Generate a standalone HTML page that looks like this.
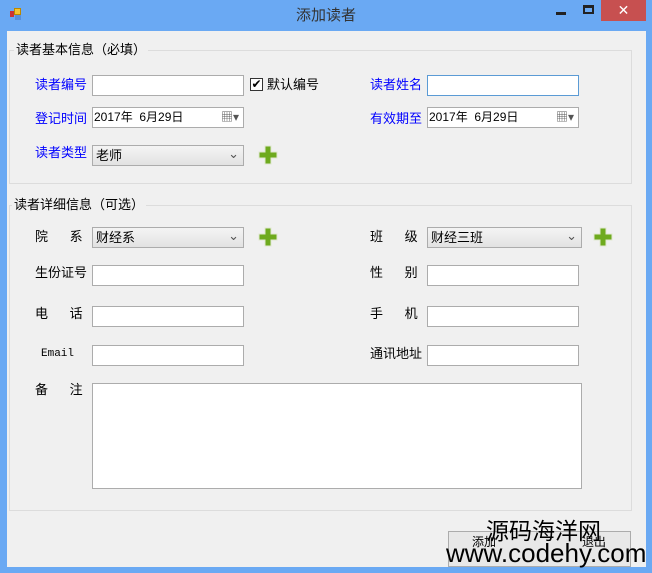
<!DOCTYPE html>
<html><head><meta charset="utf-8"><style>
*{margin:0;padding:0;box-sizing:border-box}
body{width:652px;height:573px;background:#6aa9f3;position:relative;overflow:hidden;font-family:"Liberation Sans","Noto Sans CJK SC",sans-serif;font-size:12px;color:#000;line-height:15px}
.a{position:absolute}
.client{left:7px;top:31px;width:639px;height:536px;background:#f0f0f0}
.title{left:0;top:7px;width:652px;text-align:center;font-size:15px;color:#333;line-height:18px}
.grp{border:1px solid #dcdcdc}
.lt{background:#f0f0f0;padding:0 2px;font-size:13px}
.lb{font-size:13px}
.blue{color:#0000ff}
.in{background:#fff;border:1px solid #acacac;height:21px;padding:2px 1px;font-size:12px}
.cb{background:linear-gradient(#f4f4f4,#e2e2e2);border:1px solid #acacac;height:21px;padding:2px 3px;font-size:13px}
.cb:after{content:"⌄";position:absolute;right:4px;top:0px;color:#555;font-size:13px}
.plus{width:20px;height:20px}
</style></head><body>
<div class="a" style="left:9px;top:7px;width:14px;height:14px">
<div class="a" style="left:1px;top:4px;width:4px;height:6px;background:#c33"></div>
<div class="a" style="left:5px;top:1px;width:7px;height:7px;background:#f4c430;border:1px solid #b80"></div>
<div class="a" style="left:6px;top:8px;width:6px;height:5px;background:#5a8fd8"></div></div>
<div class="a title">添加读者</div>
<div class="a" style="left:556px;top:12px;width:10px;height:3px;background:#222"></div>
<div class="a" style="left:583px;top:5px;width:11px;height:9px;border:2px solid #222;border-top-width:3px"></div>
<div class="a" style="left:601px;top:0;width:45px;height:21px;background:#c75050;color:#fff;text-align:center;font-size:14px;line-height:21px">✕</div>
<div class="a client"></div>

<div class="a grp" style="left:9px;top:50px;width:623px;height:134px"></div>
<div class="a lt" style="left:14px;top:42px">读者基本信息（必填）</div>
<div class="a lb blue" style="left:35px;top:77px">读者编号</div>
<div class="a in" style="left:92px;top:75px;width:152px"></div>
<div class="a" style="left:250px;top:78px;width:13px;height:13px;background:#fff;border:1px solid #333;font-size:12px;line-height:11px;text-align:center">✔</div>
<div class="a lb" style="left:267px;top:77px">默认编号</div>
<div class="a lb blue" style="left:370px;top:77px">读者姓名</div>
<div class="a in" style="left:427px;top:75px;width:152px;border-color:#5b9bd5"></div>
<div class="a lb blue" style="left:35px;top:111px">登记时间</div>
<div class="a in" style="left:92px;top:107px;width:152px">2017年&nbsp; 6月29日<span class="a" style="right:4px;top:2px;color:#555">▦▾</span></div>
<div class="a lb blue" style="left:370px;top:111px">有效期至</div>
<div class="a in" style="left:427px;top:107px;width:152px">2017年&nbsp; 6月29日<span class="a" style="right:4px;top:2px;color:#555">▦▾</span></div>
<div class="a lb blue" style="left:35px;top:145px">读者类型</div>
<div class="a cb" style="left:92px;top:145px;width:152px">老师</div>
<svg class="a plus" style="left:258px;top:145px" viewBox="0 0 20 20"><path d="M7 1h6v6h6v6h-6v6H7v-6H1V7h6z" fill="#6eaa1e" stroke="#e0e8d0"/></svg>

<div class="a grp" style="left:9px;top:205px;width:623px;height:306px"></div>
<div class="a lt" style="left:12px;top:197px">读者详细信息（可选）</div>
<div class="a lb" style="left:35px;top:229px">院&nbsp;&nbsp;&nbsp;&nbsp;&nbsp; 系</div>
<div class="a cb" style="left:92px;top:227px;width:152px">财经系</div>
<svg class="a plus" style="left:258px;top:227px" viewBox="0 0 20 20"><path d="M7 1h6v6h6v6h-6v6H7v-6H1V7h6z" fill="#6eaa1e" stroke="#e0e8d0"/></svg>
<div class="a lb" style="left:370px;top:229px">班&nbsp;&nbsp;&nbsp;&nbsp;&nbsp; 级</div>
<div class="a cb" style="left:427px;top:227px;width:155px">财经三班</div>
<svg class="a plus" style="left:593px;top:227px" viewBox="0 0 20 20"><path d="M7 1h6v6h6v6h-6v6H7v-6H1V7h6z" fill="#6eaa1e" stroke="#e0e8d0"/></svg>
<div class="a lb" style="left:35px;top:265px">生份证号</div>
<div class="a in" style="left:92px;top:265px;width:152px"></div>
<div class="a lb" style="left:370px;top:265px">性&nbsp;&nbsp;&nbsp;&nbsp;&nbsp; 别</div>
<div class="a in" style="left:427px;top:265px;width:152px"></div>
<div class="a lb" style="left:35px;top:306px">电&nbsp;&nbsp;&nbsp;&nbsp;&nbsp; 话</div>
<div class="a in" style="left:92px;top:306px;width:152px"></div>
<div class="a lb" style="left:370px;top:306px">手&nbsp;&nbsp;&nbsp;&nbsp;&nbsp; 机</div>
<div class="a in" style="left:427px;top:306px;width:152px"></div>
<div class="a" style="left:41px;top:347px;font-size:11px;font-family:'Liberation Mono',monospace">Email</div>
<div class="a in" style="left:92px;top:345px;width:152px"></div>
<div class="a lb" style="left:370px;top:346px">通讯地址</div>
<div class="a in" style="left:427px;top:345px;width:152px"></div>
<div class="a lb" style="left:35px;top:382px">备&nbsp;&nbsp;&nbsp;&nbsp;&nbsp; 注</div>
<div class="a in" style="left:92px;top:383px;width:490px;height:106px"></div>

<div class="a" style="left:448px;top:531px;width:183px;height:36px;border:1px solid #acacac;background:#e8e8e8"></div>
<div class="a" style="left:472px;top:535px;font-size:12px">添加</div>
<div class="a" style="left:582px;top:535px;font-size:12px">退出</div>
<div class="a" style="left:486px;top:518px;font-size:23px;line-height:26px;color:#000">源码海洋网</div>
<div class="a" style="left:446px;top:539px;font-size:26px;line-height:28px;color:#000">www.codehy.com</div>
</body></html>
